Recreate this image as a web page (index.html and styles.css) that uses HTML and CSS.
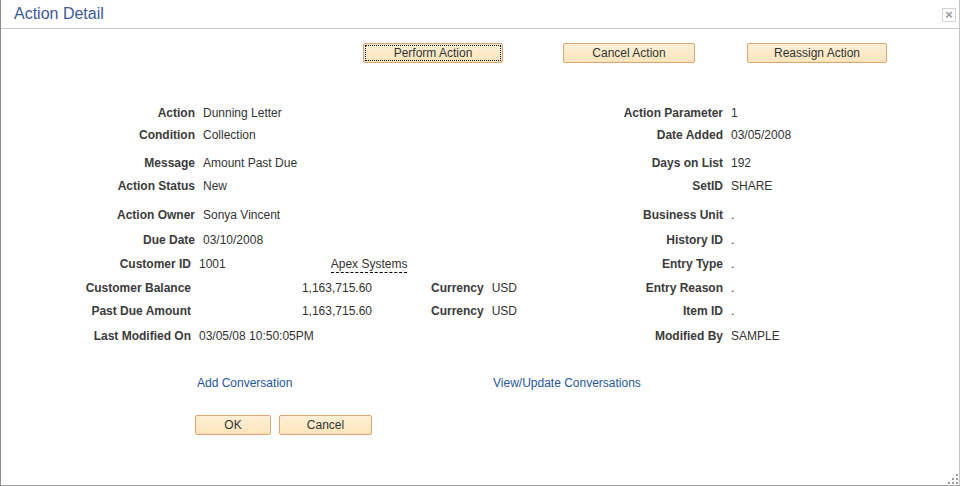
FILE: index.html
```html
<!DOCTYPE html>
<html lang="en">
<head>
    <meta charset="utf-8">
    <title>Action Detail</title>
    <link rel="stylesheet" href="styles.css">
</head>
<body>
    <div class="dialog">
        <div class="dialog-head">
            <span class="dialog-title">Action Detail</span>
            <span class="dialog-close">&#215;</span>
        </div>

        <div class="toolbar">
            <button class="ps-btn btn-perform"><span class="focus-ring">Perform Action</span></button>
            <button class="ps-btn btn-cancel-action">Cancel Action</button>
            <button class="ps-btn btn-reassign">Reassign Action</button>
        </div>

        <div class="fields">
            <span class="lbl">Action</span>
            <span class="val">Dunning Letter</span>
            <span class="rlbl">Action Parameter</span>
            <span class="val">1</span>

            <span class="lbl">Condition</span>
            <span class="val">Collection</span>
            <span class="rlbl">Date Added</span>
            <span class="val">03/05/2008</span>

            <span class="lbl">Message</span>
            <span class="val">Amount Past Due</span>
            <span class="rlbl">Days on List</span>
            <span class="val">192</span>

            <span class="lbl">Action Status</span>
            <span class="val">New</span>
            <span class="rlbl">SetID</span>
            <span class="val">SHARE</span>

            <span class="lbl">Action Owner</span>
            <span class="val">Sonya Vincent</span>
            <span class="rlbl">Business Unit</span>
            <span class="val">.</span>

            <span class="lbl">Due Date</span>
            <span class="val">03/10/2008</span>
            <span class="rlbl">History ID</span>
            <span class="val">.</span>

            <span class="lbl lbl-narrow">Customer ID</span>
            <span class="val val-wide cust">
                <span class="cust-id">1001</span>
                <span class="cust-name">Apex Systems</span>
            </span>
            <span class="rlbl">Entry Type</span>
            <span class="val">.</span>

            <span class="lbl lbl-narrow">Customer Balance</span>
            <span class="val amount-row">
                <span class="amount">1,163,715.60</span>
                <span class="cur-lbl">Currency</span>
                <span>USD</span>
            </span>
            <span class="rlbl">Entry Reason</span>
            <span class="val">.</span>

            <span class="lbl lbl-narrow">Past Due Amount</span>
            <span class="val amount-row">
                <span class="amount">1,163,715.60</span>
                <span class="cur-lbl">Currency</span>
                <span>USD</span>
            </span>
            <span class="rlbl">Item ID</span>
            <span class="val">.</span>

            <span class="lbl lbl-narrow">Last Modified On</span>
            <span class="val val-wide">03/05/08 10:50:05PM</span>
            <span class="rlbl">Modified By</span>
            <span class="val">SAMPLE</span>
        </div>

        <div class="links">
            <a href="#" class="ps-link">Add Conversation</a>
            <a href="#" class="ps-link">View/Update Conversations</a>
        </div>

        <div class="footer">
            <button class="ps-btn btn-ok">OK</button>
            <button class="ps-btn btn-cancel">Cancel</button>
        </div>

        <div class="grip">
            <i></i><i></i><i></i><i></i><i></i><i></i>
        </div>
    </div>
</body>
</html>
```

FILE: styles.css
```css
html, body {
    margin: 0;
    padding: 0;
    background: #fff;
}

body {
    font-family: "Liberation Sans", Arial, sans-serif;
    font-size: 12px;
    color: #333;
}

.dialog {
    position: relative;
    width: 960px;
    height: 486px;
    box-sizing: border-box;
    border-left: 1px solid #8c8c8c;
    border-right: 1px solid #c4c4c4;
    border-bottom: 1px solid #a0a0a0;
    overflow: hidden;
}

/* Cabecera */
.dialog-head {
    display: flex;
    justify-content: space-between;
    align-items: center;
    height: 28px;
    border-bottom: 1px solid #c8c9d1;
    padding: 0 3px 0 13px;
}

.dialog-title {
    font-size: 16px;
    color: #3c5a99;
}

.dialog-close {
    display: inline-flex;
    justify-content: center;
    align-items: center;
    width: 12px;
    height: 12px;
    border: 1px solid #d2d2d2;
    color: #9a9a9a;
    font-size: 13px;
    font-weight: bold;
    line-height: 1;
    margin-top: 1px;
}

/* Botones */
.ps-btn {
    font-family: "Liberation Sans", Arial, sans-serif;
    font-size: 12px;
    color: #333;
    height: 20px;
    padding: 0;
    background: linear-gradient(#fdf0d6, #fbe4bc);
    border: 1px solid #e0a56c;
    border-radius: 2px;
    cursor: pointer;
}

.toolbar {
    display: flex;
    padding: 14px 0 0 362px;
}

.btn-perform {
    width: 140px;
    padding: 1px;
}

.focus-ring {
    display: flex;
    justify-content: center;
    align-items: center;
    height: 100%;
    border: 1px dotted #000;
    box-sizing: border-box;
}

.btn-cancel-action {
    width: 132px;
    margin-left: 60px;
}

.btn-reassign {
    width: 140px;
    margin-left: 52px;
}

/* Campos */
.fields {
    display: grid;
    grid-template-columns: 194px 349px 163px 1fr;
    grid-template-rows: 22px 28px 23px 29px 25px 24px 24px 23px 25px 14px;
    column-gap: 8px;
    margin-top: 43px;
    line-height: 14px;
}

.lbl, .rlbl {
    font-weight: bold;
    text-align: right;
    color: #3b3b3b;
    white-space: nowrap;
}

.lbl-narrow {
    padding-right: 4px;
}

.val-wide {
    margin-left: -4px;
}

.cust {
    display: flex;
}

.cust-name {
    margin-left: 105px;
    border-bottom: 1px dashed #000;
    height: 14px;
    padding-bottom: 1px;
}

.amount-row {
    display: flex;
}

.amount {
    width: 169px;
    text-align: right;
}

.cur-lbl {
    font-weight: bold;
    color: #3b3b3b;
    margin: 0 8px 0 59px;
}

/* Enlaces */
.links {
    display: grid;
    grid-template-columns: 296px auto;
    padding-left: 196px;
    margin-top: 33px;
    line-height: 14px;
}

.ps-link {
    color: #1f56a2;
    text-decoration: none;
    justify-self: start;
}

.footer {
    display: flex;
    gap: 8px;
    padding-left: 194px;
    margin-top: 25px;
}

.btn-ok {
    width: 76px;
}

.btn-cancel {
    width: 93px;
}

/* Agarre de redimensionado */
.grip {
    position: absolute;
    right: 1px;
    bottom: 1px;
    display: grid;
    grid-template-columns: repeat(3, 2px);
    grid-template-rows: repeat(3, 2px);
    gap: 2px;
}

.grip i {
    background: #9a9ca4;
}

.grip i:nth-child(1) {
    grid-area: 1 / 3;
}

.grip i:nth-child(2) {
    grid-area: 2 / 2;
}

.grip i:nth-child(3) {
    grid-area: 2 / 3;
}

.grip i:nth-child(4) {
    grid-area: 3 / 1;
}

.grip i:nth-child(5) {
    grid-area: 3 / 2;
}

.grip i:nth-child(6) {
    grid-area: 3 / 3;
}
```
